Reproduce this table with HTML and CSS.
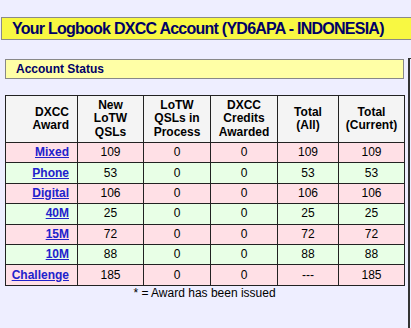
FILE: index.html
```html
<!DOCTYPE html>
<html>
<head>
<meta charset="utf-8">
<link rel="stylesheet" href="styles.css">
</head>
<body>
<div class="title">Your Logbook DXCC Account (YD6APA - INDONESIA)</div>
<div class="content">
  <div class="main">
    <div class="status">Account Status</div>
    <table class="awards">
      <colgroup>
        <col class="c1"><col class="c2"><col class="c3"><col class="c4"><col class="c5"><col class="c6">
      </colgroup>
      <thead>
        <tr>
          <th class="first">DXCC<br>Award</th>
          <th>New<br>LoTW<br>QSLs</th>
          <th>LoTW<br>QSLs in<br>Process</th>
          <th>DXCC<br>Credits<br>Awarded</th>
          <th>Total<br>(All)</th>
          <th>Total<br>(Current)</th>
        </tr>
      </thead>
      <tbody>
        <tr class="pink"><td class="first"><a href="#">Mixed</a></td><td>109</td><td>0</td><td>0</td><td>109</td><td>109</td></tr>
        <tr class="green"><td class="first"><a href="#">Phone</a></td><td>53</td><td>0</td><td>0</td><td>53</td><td>53</td></tr>
        <tr class="pink"><td class="first"><a href="#">Digital</a></td><td>106</td><td>0</td><td>0</td><td>106</td><td>106</td></tr>
        <tr class="green"><td class="first"><a href="#">40M</a></td><td>25</td><td>0</td><td>0</td><td>25</td><td>25</td></tr>
        <tr class="pink"><td class="first"><a href="#">15M</a></td><td>72</td><td>0</td><td>0</td><td>72</td><td>72</td></tr>
        <tr class="green"><td class="first"><a href="#">10M</a></td><td>88</td><td>0</td><td>0</td><td>88</td><td>88</td></tr>
        <tr class="pink"><td class="first"><a href="#">Challenge</a></td><td>185</td><td>0</td><td>0</td><td>---</td><td>185</td></tr>
      </tbody>
    </table>
    <div class="note">* = Award has been issued</div>
  </div>
  <div class="side"></div>
</div>
</body>
</html>
```

FILE: styles.css
```css
html, body {
  margin: 0;
  padding: 0;
  background: #eeeeff;
  overflow: hidden;
  font-family: "Liberation Sans", Arial, sans-serif;
}
body {
  width: 411px;
  height: 328px;
}
.title {
  margin: 17px -20px 0 1px;
  height: 21px;
  border: 1px solid #8a8a8a;
  background: #f8f842;
  color: #000066;
  font-weight: bold;
  font-size: 16px;
  letter-spacing: -0.75px;
  line-height: 22px;
  padding-left: 10px;
  white-space: nowrap;
}
.content {
  display: flex;
  margin-top: 18px;
}
.main {
  width: 399px;
  margin-left: 5px;
  flex: none;
}
.side {
  margin-left: 4px;
  flex: 1;
  height: 300px;
  border-left: 2px solid #333;
  border-top: 1px solid #333;
}
.status {
  margin-top: 1px;
  height: 18px;
  border: 1px solid #888;
  background: #ffffa6;
  color: #000066;
  font-weight: bold;
  font-size: 12px;
  line-height: 19px;
  padding-left: 10px;
}
.awards {
  margin-top: 16px;
  width: 399px;
  table-layout: fixed;
  border-collapse: collapse;
  border: 1px solid #222;
  font-size: 12px;
  color: #000;
}
.c1 { width: 72px; }
.c2 { width: 66px; }
.c3 { width: 67px; }
.c4 { width: 67px; }
.c5 { width: 61px; }
.c6 { width: 66px; }
.awards th, .awards td {
  border: 1px solid #222;
  padding: 0 2px;
  text-align: center;
  white-space: nowrap;
}
.awards th {
  background: #f4f4f4;
  font-weight: bold;
  height: 46px;
  line-height: 13.5px;
}
.awards td {
  height: 19.4px;
  line-height: 15px;
}
.awards .first {
  text-align: right;
  padding-right: 8px;
}
.awards a {
  color: #2222cc;
  font-weight: bold;
  text-decoration: underline;
}
.pink { background: #ffe0e6; }
.green { background: #e8ffe6; }
.note {
  text-align: center;
  font-size: 12px;
  margin-top: 0;
  line-height: 14px;
  color: #000;
}
```
